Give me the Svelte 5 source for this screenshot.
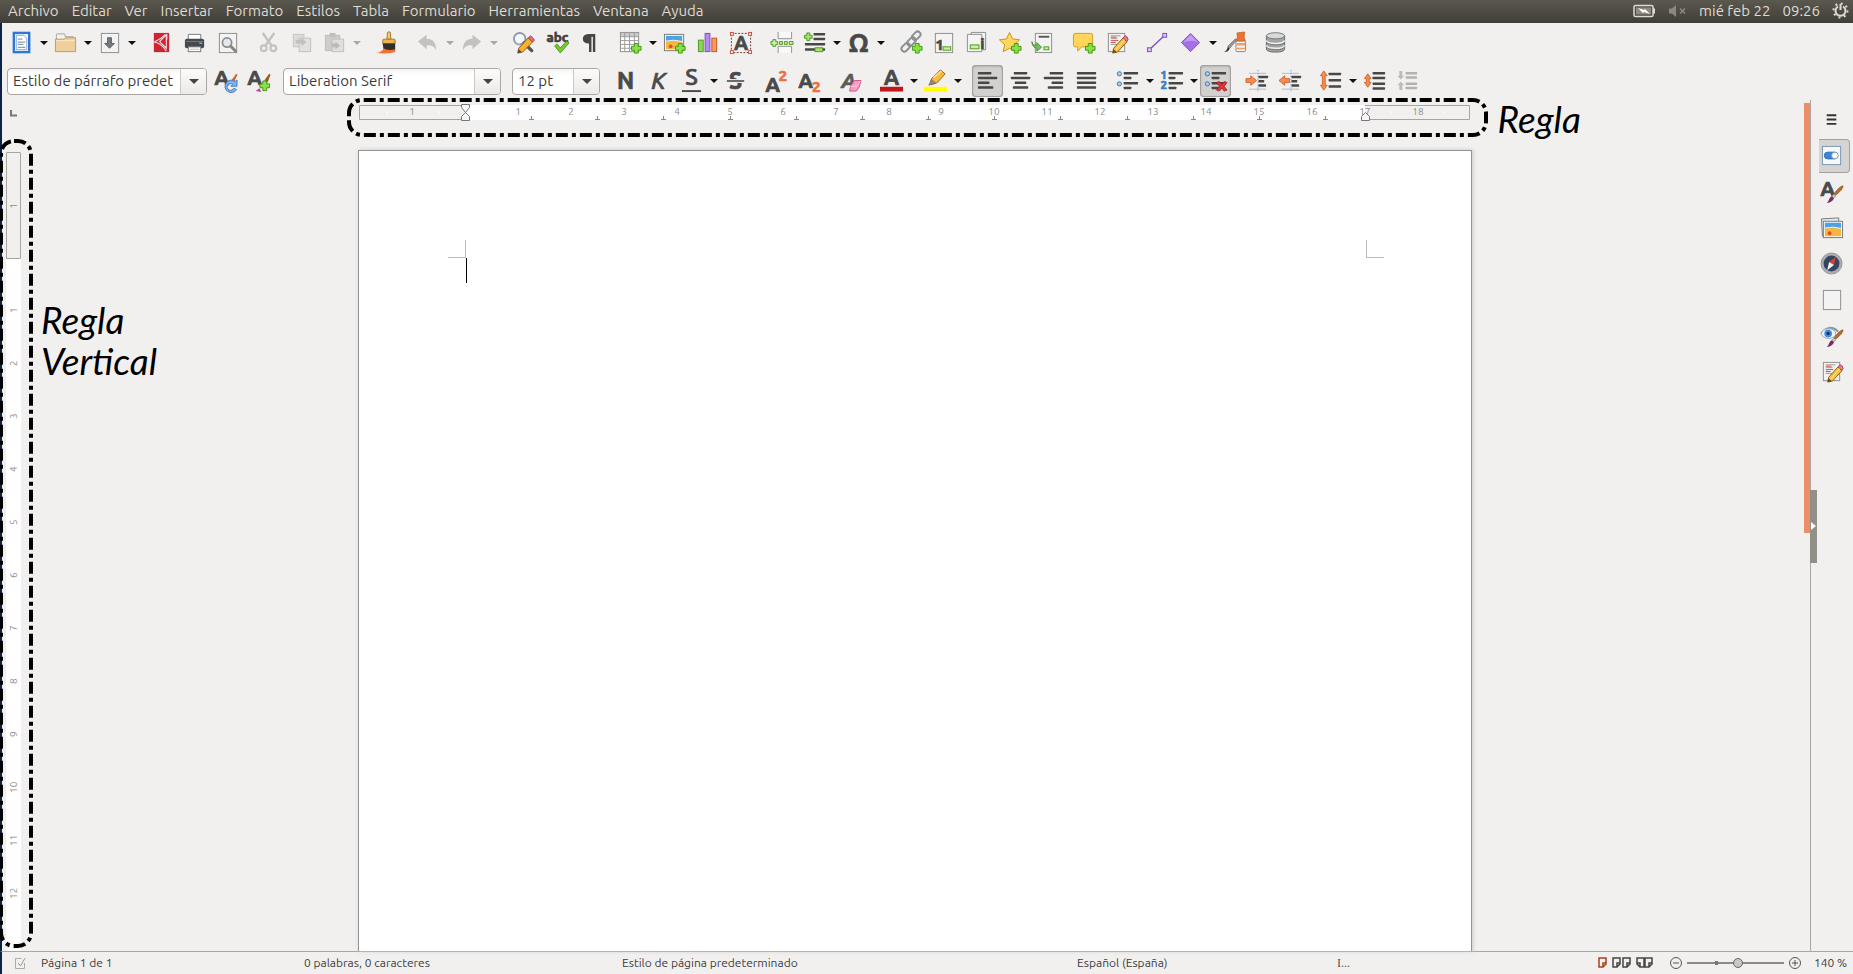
<script>
  const plus = (x, y) =>
    `<path d="M${x + 3} ${y}h4v3h3v4h-3v3h-4v-3h-3v-4h3z" fill="#8ae04a" stroke="#3f9a0c"/>`;
  const bars = (x, rows, color = '#474747') =>
    rows.map(([y, dx, w]) => `<rect x="${x + dx}" y="${y}" width="${w}" height="2.6" rx=".5" fill="${color}"/>`).join('');
  const letter = (t, x, y, size, fill = '#4a4a4a', extra = '') =>
    `<text x="${x}" y="${y}" font-size="${size}" font-family="Ubuntu, Noto Sans, sans-serif" font-weight="700" fill="${fill}" stroke="${fill}" stroke-width=".7" text-anchor="middle" ${extra}>${t}</text>`;
  const sheet = (x = 3, y = 2, w = 18, h = 20) =>
    `<rect x="${x + 0.5}" y="${y + 0.5}" width="${w}" height="${h}" fill="#f3f3f3" stroke="#8d8d8d"/>`;
  const pencil = `<path d="M8 23l1-5L19 7l4 4L13 22z" fill="#fbc13d" stroke="#8d5a12"/><path d="M19 7l2-2q3 1 3 4l-1.500 2z" fill="#ec7f98" stroke="#a23d55"/><path d="M8 23l1-4 3 3z" fill="#5a4026"/><path d="M11 20L20.500 9" stroke="#ffe69a"/>`;
  const brush = `<path d="M24 6q0 4-8 10l-1.500-1.500Q20 7 24 6z" fill="#b96e2a" stroke="#6e3c10" stroke-width=".6"/><path d="M14.500 14.500l2 2-2.500 2.500-2-2z" fill="#c4c4c4" stroke="#777" stroke-width=".5"/><path d="M7 24q2-2 2.500-4t3-3l2 2q-1 4-7.500 5z" fill="#7b2b5a"/>`;
  const photo = `<rect x="2.500" y="3.500" width="20" height="17" fill="#fff" stroke="#777"/><path d="M4 5h17v7H4z" fill="#4ba3e3"/><path d="M4 11q8-3 17 0v8H4z" fill="#f5b544"/><circle cx="9" cy="16" r="2" fill="#d8541c"/><path d="M4 10.500q8-2 17 .5" stroke="#e8f5ff" fill="none"/>`;
  const arrowRight = `<path d="M1 10h5V7l6 5-6 5v-3H1z" fill="#f58c52" stroke="#c9541a" stroke-width=".8"/>`;
  const vertArrow = (x, a, b) =>
    `<path d="M${x} ${a}l3.500 5h-2v${b - a - 10}h2L${x} ${b}l-3.500-5h2v-${b - a - 10}h-2z" fill="#f58c52" stroke="#c9541a" stroke-width=".8"/>`;
  const bullets = `<circle cx="3.500" cy="5" r="2.200" fill="#a9cdf0" stroke="#3c78b8"/><circle cx="3.500" cy="15.500" r="2.200" fill="#a9cdf0" stroke="#3c78b8"/>` + bars(8, [[3, 0, 15], [8, 0, 8], [13.500, 0, 15], [18.500, 0, 8]]);

  const icons = {
    nuevo: `<rect x="4" y="2" width="16" height="20" fill="#fff" stroke="#2f77d0" stroke-width="2.500"/><path d="M6.500 4.500h8l3 3v12h-11z" fill="#fff" stroke="#75a9e4"/><path d="M8 8.500h5M8 11.500h8M8 14h6M8 17h8" stroke="#92a0ad" stroke-width="1.300"/>`,
    abrir: `<path d="M2.500 6V4q0-1 1-1h7q1 0 1 1v2h8.500v8h-17.500z" fill="#f4f2ef" stroke="#a6a097"/><path d="M1.500 8.500h9l2-1.500h10v14.500h-21z" fill="#efcf9b" stroke="#c39b5a"/><path d="M2.500 10h19" stroke="#fbe9c9"/>`,
    guardar: sheet() + `<path d="M10 7h4v6h3l-5 5-5-5h3z" fill="#777b80" stroke="#5c6065"/>`,
    pdf: `<rect x="4" y="2" width="16" height="20" fill="#cf2233"/><path d="M17.500 3v6M16 3.500Q11 9 4.500 11.500q7 1 12.500 9.500M10 11l7-7v14z" stroke="#f4dadd" stroke-width="1.200" fill="none"/>`,
    imprimir: `<path d="M5.500 9V3.500h13V9" fill="#fff" stroke="#777"/><rect x="2" y="8" width="20" height="10" rx="2" fill="#45484c"/><path d="M3 11h18" stroke="#777b80"/><rect x="5.500" y="16.500" width="13" height="5" fill="#fff" stroke="#777"/><path d="M7 19h10" stroke="#bbb"/><rect x="17" y="12" width="3" height="1.500" fill="#5eb8f0"/>`,
    previa: sheet() + `<circle cx="11.500" cy="12" r="4.800" fill="#e1e9ee" stroke="#8d8d8d" stroke-width="1.800"/><path d="M15.500 16l5 5" stroke="#8a8577" stroke-width="3" stroke-linecap="round"/>`,
    cortar: `<g fill="none" stroke="#c4c2c0"><path d="M6 2l9 13M18 2L9 15" stroke-width="2.600"/><circle cx="7" cy="18" r="3" stroke-width="2.200"/><circle cx="17" cy="18" r="3" stroke-width="2.200"/></g>`,
    copiar: `<rect x="3.500" y="3.500" width="11" height="13" fill="#dedcda" stroke="#c6c4c2"/><rect x="9.500" y="7.500" width="12" height="14" fill="#e3e1df" stroke="#c2c0be"/><path d="M6 9h6V7l5 4.500-5 4.500v-3H6z" fill="#c3c1bf"/>`,
    pegar: `<rect x="2.500" y="4.500" width="15" height="16" fill="#cfcdcb" stroke="#bfbdbb"/><rect x="7" y="2" width="6" height="4" fill="#c0bebc"/><rect x="9.500" y="8.500" width="12" height="13" fill="#e1dfdd" stroke="#c2c0be"/><path d="M9 13h4v-2l5 4-5 4v-2H9z" fill="#bcbab8"/>`,
    clonar: `<path d="M13 1.500q1.500-1.500 3 0l.500 7h-4z" fill="#f2ca7a" stroke="#a5762a"/><path d="M9 8.500h11q1 0 1 1.500v3H8v-3q0-1.500 1-1.500z" fill="#eab54d" stroke="#a5762a"/><path d="M8 13h13v7H9z" fill="#2f2f2f"/><path d="M9 18q4 3 12 1v3q-6 2-20 1 7-1 8-5z" fill="#f2702c"/>`,
    deshacer: `<path d="M2 11l9-7v4q10 0 10 12-3-6-10-5v4z" fill="#c4c2c0"/>`,
    rehacer: `<path d="M22 11l-9-7v4Q3 8 3 20q3-6 10-5v4z" fill="#c4c2c0"/>`,
    buscar: `<circle cx="8" cy="8" r="6" fill="#f6f9fb" stroke="#8d98a8" stroke-width="2"/><path d="M3 10q2 4 5 4" stroke="#b9c9e6" fill="none"/><path d="M12.500 12.500l8 8" stroke="#555" stroke-width="3.500" stroke-linecap="round"/><path d="M6 23l1-5 10-11 4.500 4.500L11 22z" fill="#fbae2f" stroke="#8d5a12"/><path d="M17 7l2.500-2 4 4.500-2 2z" fill="#ec6f80" stroke="#a23d55"/><path d="M6 23l1-4 3 3z" fill="#444"/>`,
    ortografia: letter('abc', 13, 11, 14, '#3f3f3f') + `<path d="M10 15.500l2.500-2 3.500 4 6.500-7 2.500 2L16 23z" fill="#73c92d" stroke="#3f8f10" stroke-width=".8"/>`,
    marcas: `<path d="M18 3v19h-2.500V6H14v16h-2.500v-9Q5 13 5 8t7-5z" fill="#454545"/>`,
    tabla: `<rect x="1.500" y="1.500" width="19" height="20" fill="#fff" stroke="#8b8b8b"/><path d="M2 2h18v4H2z" fill="#c8ccd0"/><path d="M1.500 6h19M1.500 10h19M1.500 14h19M1.500 18h19M6 1.500v20M11 1.500v20M16 1.500v20" stroke="#9a9a9a"/>` + plus(13, 13),
    imagen: `<g transform="translate(-1 0)">${photo}</g>` + plus(13, 13),
    grafico: `<rect x="2.500" y="9.500" width="5" height="12" fill="#8fd45a" stroke="#4f9a1a"/><rect x="9.500" y="2.500" width="5" height="19" fill="#b58be8" stroke="#7d4ec0"/><rect x="16.500" y="7.500" width="5" height="14" fill="#f79a62" stroke="#c9541a"/>`,
    cuadro: `<rect x="2.500" y="2.500" width="20" height="20" fill="none" stroke="#6b3a2a" stroke-dasharray="2 1.500"/>` + letter('A', 12.500, 20, 21) + [[1, 1], [20, 1], [1, 20], [20, 20]].map(([x, y]) => `<rect x="${x + 0.5}" y="${y + 0.5}" width="3" height="3" fill="#fff" stroke="#d8433a"/>`).join(''),
    salto: `<path d="M8.500 1v7h14V1M8.500 23v-7h14v7" fill="#f8f8f8" stroke="#909090"/><path d="M3 9h3v2h2v3H6v2H3v-2H1v-3h2zM10 11h3v3h-3zM15 11h3v3h-3zM20 11h4v3h-4z" fill="#c8efa8" stroke="#4f9a1a"/>`,
    campo: `<path d="M4 2h3v2.500h2.500v3H7V10H4V7.500H1.500v-3H4z" fill="#a6e070" stroke="#4f9a1a"/>` + bars(2, [[2, 9, 12], [7, 9, 12], [12.500, 0, 21], [18, 0, 21]]) + `<rect x="12.500" y="17.500" width="8" height="4" fill="#a6e070" stroke="#4f9a1a"/>`,
    omega: letter('Ω', 12, 22, 27, '#484848'),
    enlace: `<g fill="none" stroke="#8b8f92" stroke-width="2"><rect x="15" y="0" width="6" height="10" rx="3" transform="rotate(45 18 5)"/><rect x="10" y="6" width="6" height="10" rx="3" transform="rotate(45 13 11)"/><rect x="4" y="12" width="6" height="10" rx="3" transform="rotate(45 7 17)"/></g>` + plus(14, 13),
    pie: sheet() + letter('1', 8, 20, 16) + `<rect x="11.500" y="16.500" width="8" height="3.500" fill="#c8efa8" stroke="#4f9a1a"/>`,
    final: `<path d="M6.500 1.500h15v18h-15z" fill="#f3f3f3" stroke="#8d8d8d"/><path d="M2.500 3.500h15v18h-15z" fill="#f3f3f3" stroke="#8d8d8d"/><rect x="5.500" y="14.500" width="9" height="4" fill="#c8efa8" stroke="#4f9a1a"/>` + letter('i', 18, 19, 16),
    marcador: `<path d="M12 1.500l3.200 6.800 7.300.9-5.400 5 1.500 7.300L12 18l-6.600 3.500 1.500-7.300-5.400-5 7.300-.9z" fill="#ffd75e" stroke="#c79214"/>` + plus(14, 13),
    cruzada: sheet(4, 2, 17, 20) + `<path d="M8 6h11" stroke="#555" stroke-width="2"/><path d="M1 11q0 4 5 4v-3l5 5-5 4v-3Q1 17 1 11z" fill="#73c060" stroke="#3a7d28" stroke-width=".8"/><rect x="13.500" y="16.500" width="5" height="3" fill="#c8efa8" stroke="#4f9a1a"/>`,
    comentario: `<path d="M3.500 2.500h16q2 0 2 2v10q0 2-2 2H10L6 21v-4.500H3.500q-2 0-2-2v-10q0-2 2-2z" fill="#ffd65a" stroke="#d19c22"/>` + plus(14, 13),
    cambios: sheet(3, 2, 17, 19) + `<path d="M6 5h10M6 8h7M6 14h7" stroke="#999"/><path d="M6 6.500h6M6 10h8M6 12h5" stroke="#d04a3a"/>` + pencil,
    linea: `<path d="M4 19L20 4" stroke="#7d4ec0" stroke-width="1.500"/><rect x="1.500" y="17.500" width="4" height="4" fill="#d9c4f5" stroke="#7d4ec0"/><rect x="17.500" y="2.500" width="4" height="4" fill="#d9c4f5" stroke="#7d4ec0"/>`,
    rombo: `<path d="M12 2.500l9.500 9.500-9.500 9.500L2.500 12z" fill="#a66fe8" stroke="#8754c9"/><path d="M12 4l7.500 7.500q-8-3-15 .5z" fill="#c49df4"/>`,
    dibujo: `<rect x="13.500" y="10.500" width="10" height="11" rx="1" fill="#f2f2f2" stroke="#888"/><path d="M14 12.500h9V15h-9zM14 17.500h9V19h-9z" fill="#f59a62"/><path d="M14.500 2l8-1-.5 6 1.500 3h-10l1.500-3z" fill="#f2702c" stroke="#b14d14" stroke-width=".6"/><path d="M13 8q1 1 0 3l-6 7-2-2z" fill="#999" stroke="#555" stroke-width=".6"/><path d="M1 22q3-1 4-5.500l2 1.500Q6 22 1 22z" fill="#333"/>`,
    datos: `<path d="M2.500 5v14q1 3 9.500 3t9.500-3V5z" fill="#a2a4a6" stroke="#6a6a6a"/><ellipse cx="12" cy="5" rx="9.500" ry="3.200" fill="#d8d9da" stroke="#777"/><path d="M2.500 10q1 3 9.500 3t9.500-3M2.500 15q1 3 9.500 3t9.500-3" fill="none" stroke="#f0f0f0" stroke-width="1.500"/><path d="M2.500 11.500q1 3 9.500 3t9.500-3M2.500 16.500q1 3 9.500 3t9.500-3" fill="none" stroke="#666" stroke-width=".7"/>`,
    actualizar: letter('A', 8, 17, 22) + `<path d="M18 12l5-7 1.500 1-4 8z" fill="#c96a30"/><path d="M23.500 21.500a6.500 6.500 0 1 1-1.500-8.500l2-1.500v6.500h-6.500l2-2a3.500 3.500 0 1 0 1 4z" fill="#7db4ee" stroke="#2c68b4" stroke-width=".8"/>`,
    estiloNuevo: letter('A', 8, 17, 22) + `<path d="M18 12l5-7 1.500 1-3 8z" fill="#a05a20"/><path d="M9 23l4-3 2 4z" fill="#c23ca0"/>` + plus(13.500, 12.500),
    negrita: letter('N', 12, 21, 24),
    cursiva: letter('K', 12, 21, 24, '#4a4a4a', 'font-style="italic" style="font-weight:500"'),
    subrayado: letter('S', 12, 17, 24, '#4a4a4a', 'style="font-weight:500"') + `<path d="M2 23h20" stroke="#4a4a4a" stroke-width="2"/>`,
    tachado: letter('S', 12, 21, 24) + `<path d="M3 12.500h18" stroke="#f2f0ef" stroke-width="4"/><path d="M3 12.500h18" stroke="#666" stroke-width="2"/>`,
    superindice: letter('A', 8, 24, 22) + letter('2', 18.500, 12, 16, '#ec6f3c'),
    subindice: letter('A', 8, 20, 22) + letter('2', 19, 24, 16, '#ec6f3c'),
    limpiar: letter('A', 10, 20, 22, '#5a5a5a', 'font-style="italic"') + `<path d="M12 18l4-6h7l-2 7-3 4h-7z" fill="#f79ac0" stroke="#d0558a"/><path d="M12 18h6.500L22.500 12.500" fill="none" stroke="#fbd0e2"/>`,
    color: letter('A', 12, 17, 23) + `<path d="M0 18.500h24v5H0z" fill="#c0161c"/>`,
    resaltar: `<path d="M6 16l2-6 9-9 5 4-8 9-5 2z" fill="#f9b93c" stroke="#9a6412"/><path d="M5 17l3-6 4 3.500z" fill="#909090" stroke="#666" stroke-width=".7"/><path d="M10 9l8-7" stroke="#ffe2a0" stroke-width="1.500"/><path d="M0 18.500h24v5H0z" fill="#ff0"/>`,
    izquierda: bars(2, [[3, 0, 14], [8, 0, 20], [13, 0, 12], [18, 0, 16]]),
    centrar: bars(2, [[3, 3, 14], [8, 0, 20], [13, 4, 12], [18, 2, 16]]),
    derecha: bars(2, [[3, 6, 14], [8, 0, 20], [13, 8, 12], [18, 4, 16]]),
    justificar: bars(2, [[3, 0, 20], [8, 0, 20], [13, 0, 20], [18, 0, 20]]),
    vinetas: bullets,
    numeros: letter('1', 4, 10, 12, '#3c7cc0') + letter('2', 4, 21, 12, '#3c7cc0') + bars(9, [[3, 0, 15], [8, 0, 7], [13.500, 0, 15], [18.500, 0, 8]]),
    sinLista: bullets + `<path d="M13 14l3-1 2.500 3 2.500-3 3 1-3 4 3 4-3 1-2.500-3-2.500 3-3-1 3-4z" fill="#e0343a" stroke="#9a1014" stroke-width=".7"/>`,
    sangriaMas: `<path d="M4 4.500h18M4 21h18" stroke="#b8b8b8"/><path d="M13.500 1v22" stroke="#6aa0d8" stroke-dasharray="1.500 1.500"/>` + bars(14, [[7, 0, 10], [11.500, 0, 6], [16, 0, 8]]) + arrowRight,
    sangriaMenos: `<path d="M4 4.500h18M4 21h18" stroke="#b8b8b8"/><path d="M13.500 1v22" stroke="#6aa0d8" stroke-dasharray="1.500 1.500"/>` + bars(14, [[7, 0, 10], [11.500, 0, 6], [16, 0, 8]]) + `<g transform="matrix(-1 0 0 1 13 0)">${arrowRight}</g>`,
    interlineado: vertArrow(5, 2, 22) + bars(10, [[4, 0, 13], [10.500, 0, 13], [17, 0, 13]]),
    aumentar: vertArrow(5, 5, 19) + bars(10, [[3, 0, 13], [8, 0, 13], [14, 0, 13], [19, 0, 13]]),
    reducir: `<path d="M5 11L1.500 7h2V2h3v5h2zM5 13l3.500 4h-2v5h-3v-5h-2z" fill="#bdbbb9"/>` + bars(10, [[3, 0, 12], [7.500, 0, 12], [14, 0, 12], [18.500, 0, 12]], '#b4b2b0'),
    menu: `<path d="M7 7.500h10M7 12h10M7 16.500h10" stroke="#333" stroke-width="2"/>`,
    propiedades: `<rect x="2.500" y="2.500" width="19" height="19" fill="#f6f9fc" stroke="#7894b4"/><rect x="4.500" y="8.500" width="14" height="7" rx="3.500" fill="#3c84d8" stroke="#2f6cb4"/><circle cx="15.500" cy="12" r="3.500" fill="#fff" stroke="#7894b4"/>`,
    estilos: letter('A', 8, 17, 22) + brush,
    galeria: `<path d="M1.500 3l18-1v16l-17 3z" fill="#dfe8f0" stroke="#777"/><g transform="translate(1 2)">${photo}</g>`,
    navegador: `<circle cx="12" cy="12" r="9.500" fill="#354560" stroke="#a8adb2" stroke-width="2.500"/><circle cx="12" cy="12" r="11" fill="none" stroke="#666" stroke-width=".6"/><path d="M16.500 5l-2 8.500-5-3z" fill="#e03a30"/><path d="M7.500 19l2-8.500 5 3z" fill="#f2f4f6"/>`,
    pagina: sheet(),
    inspector: `<path d="M1 10q9-11 18-2" fill="none" stroke="#8996a4" stroke-width="2"/><ellipse cx="9" cy="10" rx="7.500" ry="5" fill="#eef3f8" stroke="#9aa6b2"/><circle cx="8.500" cy="10" r="4" fill="#3b8be0"/><circle cx="8.500" cy="10" r="1.800" fill="#17365c"/>` + brush,
  };

  const menus = ['Archivo', 'Editar', 'Ver', 'Insertar', 'Formato', 'Estilos', 'Tabla', 'Formulario', 'Herramientas', 'Ventana', 'Ayuda'];

  /* d: has a drop-down arrow, off: unavailable, on: pressed */
  const estandar = [
    [{ i: 'nuevo', t: 'Nuevo', d: 1 }, { i: 'abrir', t: 'Abrir', d: 1 }, { i: 'guardar', t: 'Guardar', d: 1 }],
    [{ i: 'pdf', t: 'Exportar a PDF' }, { i: 'imprimir', t: 'Imprimir' }, { i: 'previa', t: 'Previsualizar' }],
    [{ i: 'cortar', t: 'Cortar', off: 1 }, { i: 'copiar', t: 'Copiar', off: 1 }, { i: 'pegar', t: 'Pegar', d: 1, off: 1 }],
    [{ i: 'clonar', t: 'Clonar formato' }],
    [{ i: 'deshacer', t: 'Deshacer', d: 1, off: 1 }, { i: 'rehacer', t: 'Rehacer', d: 1, off: 1 }],
    [{ i: 'buscar', t: 'Buscar' }, { i: 'ortografia', t: 'Ortografía' }, { i: 'marcas', t: 'Marcas de formato' }],
    [{ i: 'tabla', t: 'Insertar tabla', d: 1 }, { i: 'imagen', t: 'Insertar imagen' }, { i: 'grafico', t: 'Insertar gráfico' }, { i: 'cuadro', t: 'Cuadro de texto' }],
    [{ i: 'salto', t: 'Salto de página' }, { i: 'campo', t: 'Insertar campo', d: 1 }, { i: 'omega', t: 'Carácter especial', d: 1 }],
    [{ i: 'enlace', t: 'Hiperenlace' }, { i: 'pie', t: 'Nota al pie' }, { i: 'final', t: 'Nota al final' }, { i: 'marcador', t: 'Marcador' }, { i: 'cruzada', t: 'Referencia cruzada' }],
    [{ i: 'comentario', t: 'Comentario' }, { i: 'cambios', t: 'Control de cambios' }],
    [{ i: 'linea', t: 'Línea' }, { i: 'rombo', t: 'Formas', d: 1 }, { i: 'dibujo', t: 'Funciones de dibujo' }],
    [{ i: 'datos', t: 'Orígenes de datos' }],
  ];
  const formato = [
    [{ i: 'negrita', t: 'Negrita' }, { i: 'cursiva', t: 'Cursiva' }, { i: 'subrayado', t: 'Subrayado', d: 1 }, { i: 'tachado', t: 'Tachado' }],
    [{ i: 'superindice', t: 'Superíndice' }, { i: 'subindice', t: 'Subíndice' }],
    [{ i: 'limpiar', t: 'Limpiar formato' }],
    [{ i: 'color', t: 'Color de letra', d: 1 }, { i: 'resaltar', t: 'Color de resalte', d: 1 }],
    [{ i: 'izquierda', t: 'Alinear a la izquierda', on: 1 }, { i: 'centrar', t: 'Centrar' }, { i: 'derecha', t: 'Alinear a la derecha' }, { i: 'justificar', t: 'Justificar' }],
    [{ i: 'vinetas', t: 'Viñetas', d: 1 }, { i: 'numeros', t: 'Numeración', d: 1 }, { i: 'sinLista', t: 'Sin lista', on: 1 }],
    [{ i: 'sangriaMas', t: 'Aumentar sangría' }, { i: 'sangriaMenos', t: 'Reducir sangría' }],
    [{ i: 'interlineado', t: 'Interlineado', d: 1 }, { i: 'aumentar', t: 'Aumentar espaciado' }, { i: 'reducir', t: 'Reducir espaciado', off: 1 }],
  ];
  const lateral = [
    { i: 'menu', t: 'Configuración de la barra lateral' }, { i: 'propiedades', t: 'Propiedades', on: 1 }, { i: 'estilos', t: 'Estilos' },
    { i: 'galeria', t: 'Galería' }, { i: 'navegador', t: 'Navegador' }, { i: 'pagina', t: 'Página' },
    { i: 'inspector', t: 'Inspector de estilos' }, { i: 'cambios', t: 'Gestionar cambios' },
  ];

  const numerosH = Array.from({ length: 18 }, (_, k) => k + 1);
  const numerosV = Array.from({ length: 12 }, (_, k) => k + 1);
  const tabs = Array.from({ length: 13 }, (_, k) => 107 + Math.round((k + 1) * 66.15));
  const hx = (n) => Math.round(107 + n * 52.94);
</script>

{#snippet icon(name)}
  <svg class="icon" viewBox="0 0 25 25" aria-hidden="true">{@html icons[name]}</svg>
{/snippet}

{#snippet groups(list)}
  {#each list as group}
    <div class="group">
      {#each group as b}
        <button class="tool" class:on={b.on} disabled={!!b.off} aria-label={b.t}>{@render icon(b.i)}</button>
        {#if b.d}
          <button class="drop" disabled={!!b.off} aria-label={'Opciones: ' + b.t}><span class="tri"></span></button>
        {/if}
      {/each}
    </div>
  {/each}
{/snippet}

{#snippet combo(cls, label, value)}
  <div class="combo {cls}">
    <input type="text" aria-label={label} {value} />
    <button aria-label={'Abrir lista: ' + label}><span class="tri"></span></button>
  </div>
{/snippet}

<div class="app">
  <header class="menubar">
    <nav>
      {#each menus as m}<button>{m}</button>{/each}
    </nav>
    <div class="tray">
      <svg width="24" height="14" viewBox="0 0 24 14" aria-hidden="true">
        <rect x="1" y="1.500" width="19" height="11" rx="1.500" fill="none" stroke="#dfdbd2" stroke-width="1.500" />
        <rect x="3" y="3.500" width="15" height="7" fill="#8d8a82" /><path d="M21 4.500v5" stroke="#dfdbd2" stroke-width="2" />
        <path d="M5 4l6 2 1-1 5 5-6-2-1 1z" fill="#fff" />
      </svg>
      <svg width="18" height="14" viewBox="0 0 18 14" aria-hidden="true">
        <path d="M0 4.500h3l4-3.500v12L3 9.500H0z" fill="#8c8981" /><path d="M11 4.500l5 5M16 4.500l-5 5" stroke="#8c8981" stroke-width="1.500" />
      </svg>
      <span>mié feb 22</span>
      <span>09:26</span>
      <svg width="17" height="17" viewBox="0 0 17 17" aria-hidden="true">
        <circle cx="8.500" cy="8.500" r="7" fill="none" stroke="#dfdbd2" stroke-width="2" stroke-dasharray="2 3.500" />
        <path d="M6 4.500a5 5 0 1 0 5 0M8.500 2v6" fill="none" stroke="#dfdbd2" stroke-width="2" />
      </svg>
    </div>
  </header>

  <div class="toolbar first" role="toolbar" aria-label="Estándar">{@render groups(estandar)}</div>

  <div class="toolbar second" role="toolbar" aria-label="Formato">
    {@render combo('style', 'Estilo de párrafo', 'Estilo de párrafo predet')}
    <div class="group pair">
      <button class="tool" aria-label="Actualizar estilo">{@render icon('actualizar')}</button>
      <button class="tool" aria-label="Estilo nuevo">{@render icon('estiloNuevo')}</button>
    </div>
    {@render combo('font', 'Nombre del tipo de letra', 'Liberation Serif')}
    {@render combo('size', 'Tamaño de letra', '12 pt')}
    <div class="formats">{@render groups(formato)}</div>
  </div>

  <main class="work">
    <div class="vcol">
      <svg class="tabmark" width="8" height="7" viewBox="0 0 8 7" aria-hidden="true"><path d="M1 0v5.500h6" fill="none" stroke="#777" stroke-width="2" /></svg>
      <div class="vruler">
        <div class="vmargin"><span>1</span></div>
        <div class="vbody">
          {#each numerosV as n}<span>{n}</span>{/each}
        </div>
      </div>
      <svg class="vmark" aria-hidden="true"><rect x="1" y="2" rx="13" /></svg>
      <p class="note vnote">Regla<br />Vertical</p>
    </div>

    <div class="canvas">
      <div class="hruler">
        <svg width="1114" height="17" viewBox="0 0 1114 17" role="img" aria-label="Regla horizontal">
          <rect x="107" y="1" width="900" height="15" fill="#fff" />
          <path d="M107 1.500H1.500v14H107M1007 1.500h104.500v14H1007" fill="none" stroke="#a5a5a5" />
          <g class="nums">
            <text x="54" y="11">1</text>
            {#each numerosH as n}<text x={hx(n)} y="11">{n}</text>{/each}
          </g>
          {#each tabs as x}<path d="M{x - 2} 15.500h5M{x + 0.5} 12v4" stroke="#888" />{/each}
          <path d="M29 7v3M81 7v3M1033 7v3M1086 7v3" stroke="#fff" />
          <path d="M103.500.500h8v3l-4 5-4-5zM103.500 16.500v-4l4-4 4 4v4zM1003.500 16.500v-4l4-4 4 4v4z" fill="#f7f7f7" stroke="#777" />
        </svg>
        <svg class="hmark" width="1142" height="40" viewBox="0 0 1142 40" aria-hidden="true">
          <path d="M2 17V15A13 13 0 0 1 15 2H1126A13 13 0 0 1 1139 15V24A13 13 0 0 1 1126 37H15A13 13 0 0 1 2 24z" />
        </svg>
        <p class="note hnote">Regla</p>
      </div>
      <article class="page">
        <div class="corners"><i class="tl"></i><i class="tr"></i></div>
        <div class="caret"></div>
      </article>
    </div>

    <div class="scroll" aria-hidden="true"></div>

    <aside class="side">
      <button class="handle" aria-label="Ocultar barra lateral"><span></span></button>
      {#each lateral as b}
        <button class="tab" class:on={b.on} aria-label={b.t}>{@render icon(b.i)}</button>
      {/each}
    </aside>
  </main>

  <footer class="status">
    <span class="save"><svg width="12" height="12" viewBox="0 0 12 12" aria-hidden="true"><path d="M10.500 6v5.500h-9V1.500h6" fill="none" stroke="#aaa" /><path d="M4 6l2.500 3L11 1" fill="none" stroke="#999" /></svg></span>
    <span>Página 1 de 1</span>
    <span>0 palabras, 0 caracteres</span>
    <span>Estilo de página predeterminado</span>
    <span>Español (España)</span>
    <span class="ins">I...</span>
    <div class="view">
      <svg class="layouts" width="56" height="12" viewBox="0 0 56 12" fill="none" stroke-width="1.500" aria-hidden="true">
        <path d="M1 1h7v6L5 10H1zM8 6H5v4" stroke="#a8401c" />
        <path d="M15 1h7v6l-3 3h-4zM22 6h-3v4M25 1h7v6l-3 3h-4zM32 6h-3v4M46 1h-7v6l3 3h4zM39 6h3v4M47 1h7v6l-3 3h-4zM54 6h-3v4" stroke="#444" />
      </svg>
      <button class="zoom" aria-label="Reducir escala"><svg width="12" height="12" viewBox="0 0 12 12" fill="none" stroke="#555"><circle cx="6" cy="6" r="5.500" /><path d="M3 6h6" /></svg></button>
      <input type="range" min="0" max="100" value="53" aria-label="Escala" />
      <button class="zoom" aria-label="Ampliar escala"><svg width="12" height="12" viewBox="0 0 12 12" fill="none" stroke="#555"><circle cx="6" cy="6" r="5.500" /><path d="M3 6h6M6 3v6" /></svg></button>
      <span class="pct">140 %</span>
    </div>
  </footer>
</div>

<style>
  :global(body) { margin: 0; background: #f2f0ef; }
  .app {
    box-sizing: border-box; height: 100vh; display: flex; flex-direction: column; overflow: hidden;
    background: #f2f0ef; color: #3c3c3c; font: 15px/20px Ubuntu, "Noto Sans", sans-serif;
  }
  button { border: 0; padding: 0; background: none; font: inherit; color: inherit; }
  .menubar {
    height: 23px; flex: none; display: flex; justify-content: space-between; align-items: center; box-sizing: border-box;
    background: linear-gradient(#5b584f, #403e39); color: #dfdbd2; padding: 0 4px 2px 8px;
  }
  nav { display: flex; gap: 13px; }
  .tray { display: flex; align-items: center; gap: 12px; }
  .toolbar { display: flex; flex: none; align-items: center; border-left: 2px solid #0c2348; box-sizing: border-box; }
  .first { height: 38px; padding: 1px 0 0 3px; gap: 8px; }
  .second { height: 39px; padding: 1px 0 0 5px; }
  .group { display: flex; align-items: center; }
  .formats { display: flex; gap: 8px; padding-left: 9px; }
  .tool { width: 33px; height: 32px; display: grid; place-items: center; border-radius: 4px; flex: none; }
  .tool.on { width: 31px; margin: 0 1px; background: #d3d1d0; box-shadow: inset 0 0 0 1px #a3a1a0, inset 0 1px 3px #9a9897; }
  .icon { width: 24px; height: 24px; display: block; overflow: visible; }
  .drop { width: 11px; height: 32px; display: grid; place-items: center; flex: none; }
  .tri { width: 0; border: 4px solid transparent; border-top-color: #111; border-bottom: 0; }
  .drop:disabled .tri { border-top-color: #aaa8a6; }
  .combo {
    display: flex; flex: none; box-sizing: border-box; height: 27px; border: 1px solid #a9a6a3; border-radius: 4px;
    background: linear-gradient(#f4f4f4, #fff 6px); overflow: hidden;
  }
  .combo input { flex: 1; min-width: 0; border: 0; padding: 0 0 0 5px; background: none; font: 15px/20px Ubuntu, "Noto Sans", sans-serif; color: #3c3c3c; outline: 0; }
  .combo button { width: 26px; border-left: 1px solid #cbc8c5; background: linear-gradient(#fbfbfa, #eceae8); display: grid; place-items: center; }
  .combo .tri { border-width: 5px 5px 0; border-top-color: #444; }
  .style { width: 200px; }
  .font { width: 218px; margin-right: 11px; }
  .size { width: 88px; }
  .pair { padding: 0 8px 0 2px; }

  .work { flex: 1; min-height: 0; display: flex; border-left: 2px solid #0c2348; position: relative; }
  .vcol { width: 17px; flex: none; position: relative; display: flex; flex-direction: column; padding: 10px 0 0 4px; box-sizing: border-box; }
  .tabmark { margin: 0 0 35px 4px; flex: none; display: block; }
  .vruler { flex: 1; min-height: 0; width: 15px; overflow: hidden; font-size: 10px; line-height: 15px; color: #8c8c8c; }
  .vmargin { box-sizing: border-box; height: 107px; border: 1px solid #a5a5a5; border-radius: 1px; display: flex; align-items: center; justify-content: center; }
  .vruler span { writing-mode: vertical-rl; transform: rotate(180deg); text-align: center; }
  .vbody { background: #fff; height: 100%; padding-top: 25px; }
  .vbody span { display: block; height: 53px; width: 15px; }
  .vmark { position: absolute; left: -2px; top: 39px; width: 36px; height: calc(100% - 39px); overflow: visible; }
  .vmark rect { width: 30px; height: calc(100% - 7px); }
  .vmark rect, .hmark path { fill: none; stroke: #000; stroke-width: 4; stroke-dasharray: 12 4 4 4; }
  .note { margin: 0; position: absolute; color: #000; font: italic 37px/41px "Ink Free", "Segoe Print", Lato, cursive; white-space: nowrap; }
  .vnote { left: 39px; top: 199px; }
  .hnote { left: 1140px; top: -2px; }

  .canvas { flex: 1; min-width: 0; display: flex; flex-direction: column; align-items: center; }
  .hruler { position: relative; width: 1114px; height: 50px; flex: none; padding-top: 4px; box-sizing: border-box; }
  .hruler svg { display: block; }
  .hruler .hmark { position: absolute; left: -11px; top: -2px; }
  .nums { font-size: 10px; fill: #8c8c8c; text-anchor: middle; }
  .page {
    width: 1114px; flex: 1; min-height: 0; box-sizing: border-box; background: #fff; border: 1px solid #979593; border-bottom: 0;
    box-shadow: 1px 0 4px #c9c7c5; padding: 89px 87px 0 89px;
  }
  .corners { display: flex; justify-content: space-between; }
  .corners i { width: 18px; height: 18px; box-sizing: border-box; border-bottom: 1px solid #bbb; }
  .tl { border-right: 1px solid #bbb; }
  .tr { border-left: 1px solid #bbb; }
  .caret { width: 1px; height: 25px; background: #000; margin-left: 18px; }

  .scroll { width: 6px; height: 430px; margin: 3px 0 0 -6px; flex: none; background: #ee8e68; }
  .side { width: 43px; flex: none; box-sizing: border-box; border-left: 1px solid #a9a6a3; padding: 2px 0 0 8px; position: relative; }
  .tab { width: 31px; height: 36px; display: grid; place-items: center; padding-right: 5px; }
  .tab.on { height: 34px; margin: 1px 0; background: #d6d4d3; border: 1px solid #a3a1a0; border-left: 0; border-radius: 0 4px 4px 0; }
  .handle { position: absolute; left: -1px; top: calc(50% - 36px); width: 7px; height: 73px; background: #908f88; display: grid; place-items: center; }
  .handle span { width: 0; border: 4px solid transparent; border-left: 5px solid #fff; border-right: 0; }

  .status {
    height: 23px; flex: none; box-sizing: border-box; border-top: 1px solid #a9a6a3; border-left: 2px solid #0c2348; display: grid; align-items: center;
    grid-template-columns: 39px 263fr 318fr 455fr 260fr 265fr 251px; font-size: 12px; white-space: nowrap;
  }
  .save { padding-left: 12px; display: flex; }
  .ins { font-family: "Liberation Serif", serif; color: #555; }
  .view { display: flex; align-items: center; gap: 5px; }
  .view svg { display: block; }
  .layouts { margin: 0 11px 0 -4px; }
  .pct { margin-left: 8px; }
  input[type="range"] {
    appearance: none; width: 97px; height: 12px; margin: 0;
    background: linear-gradient(#777, #777) 30% 50% / 3px 4px no-repeat, linear-gradient(#8c8a88, #8c8a88) center / 100% 2px no-repeat;
  }
  input[type="range"]::-webkit-slider-thumb { appearance: none; width: 10px; height: 10px; border-radius: 50%; background: #c9c7c5; border: 1px solid #666; }
</style>
